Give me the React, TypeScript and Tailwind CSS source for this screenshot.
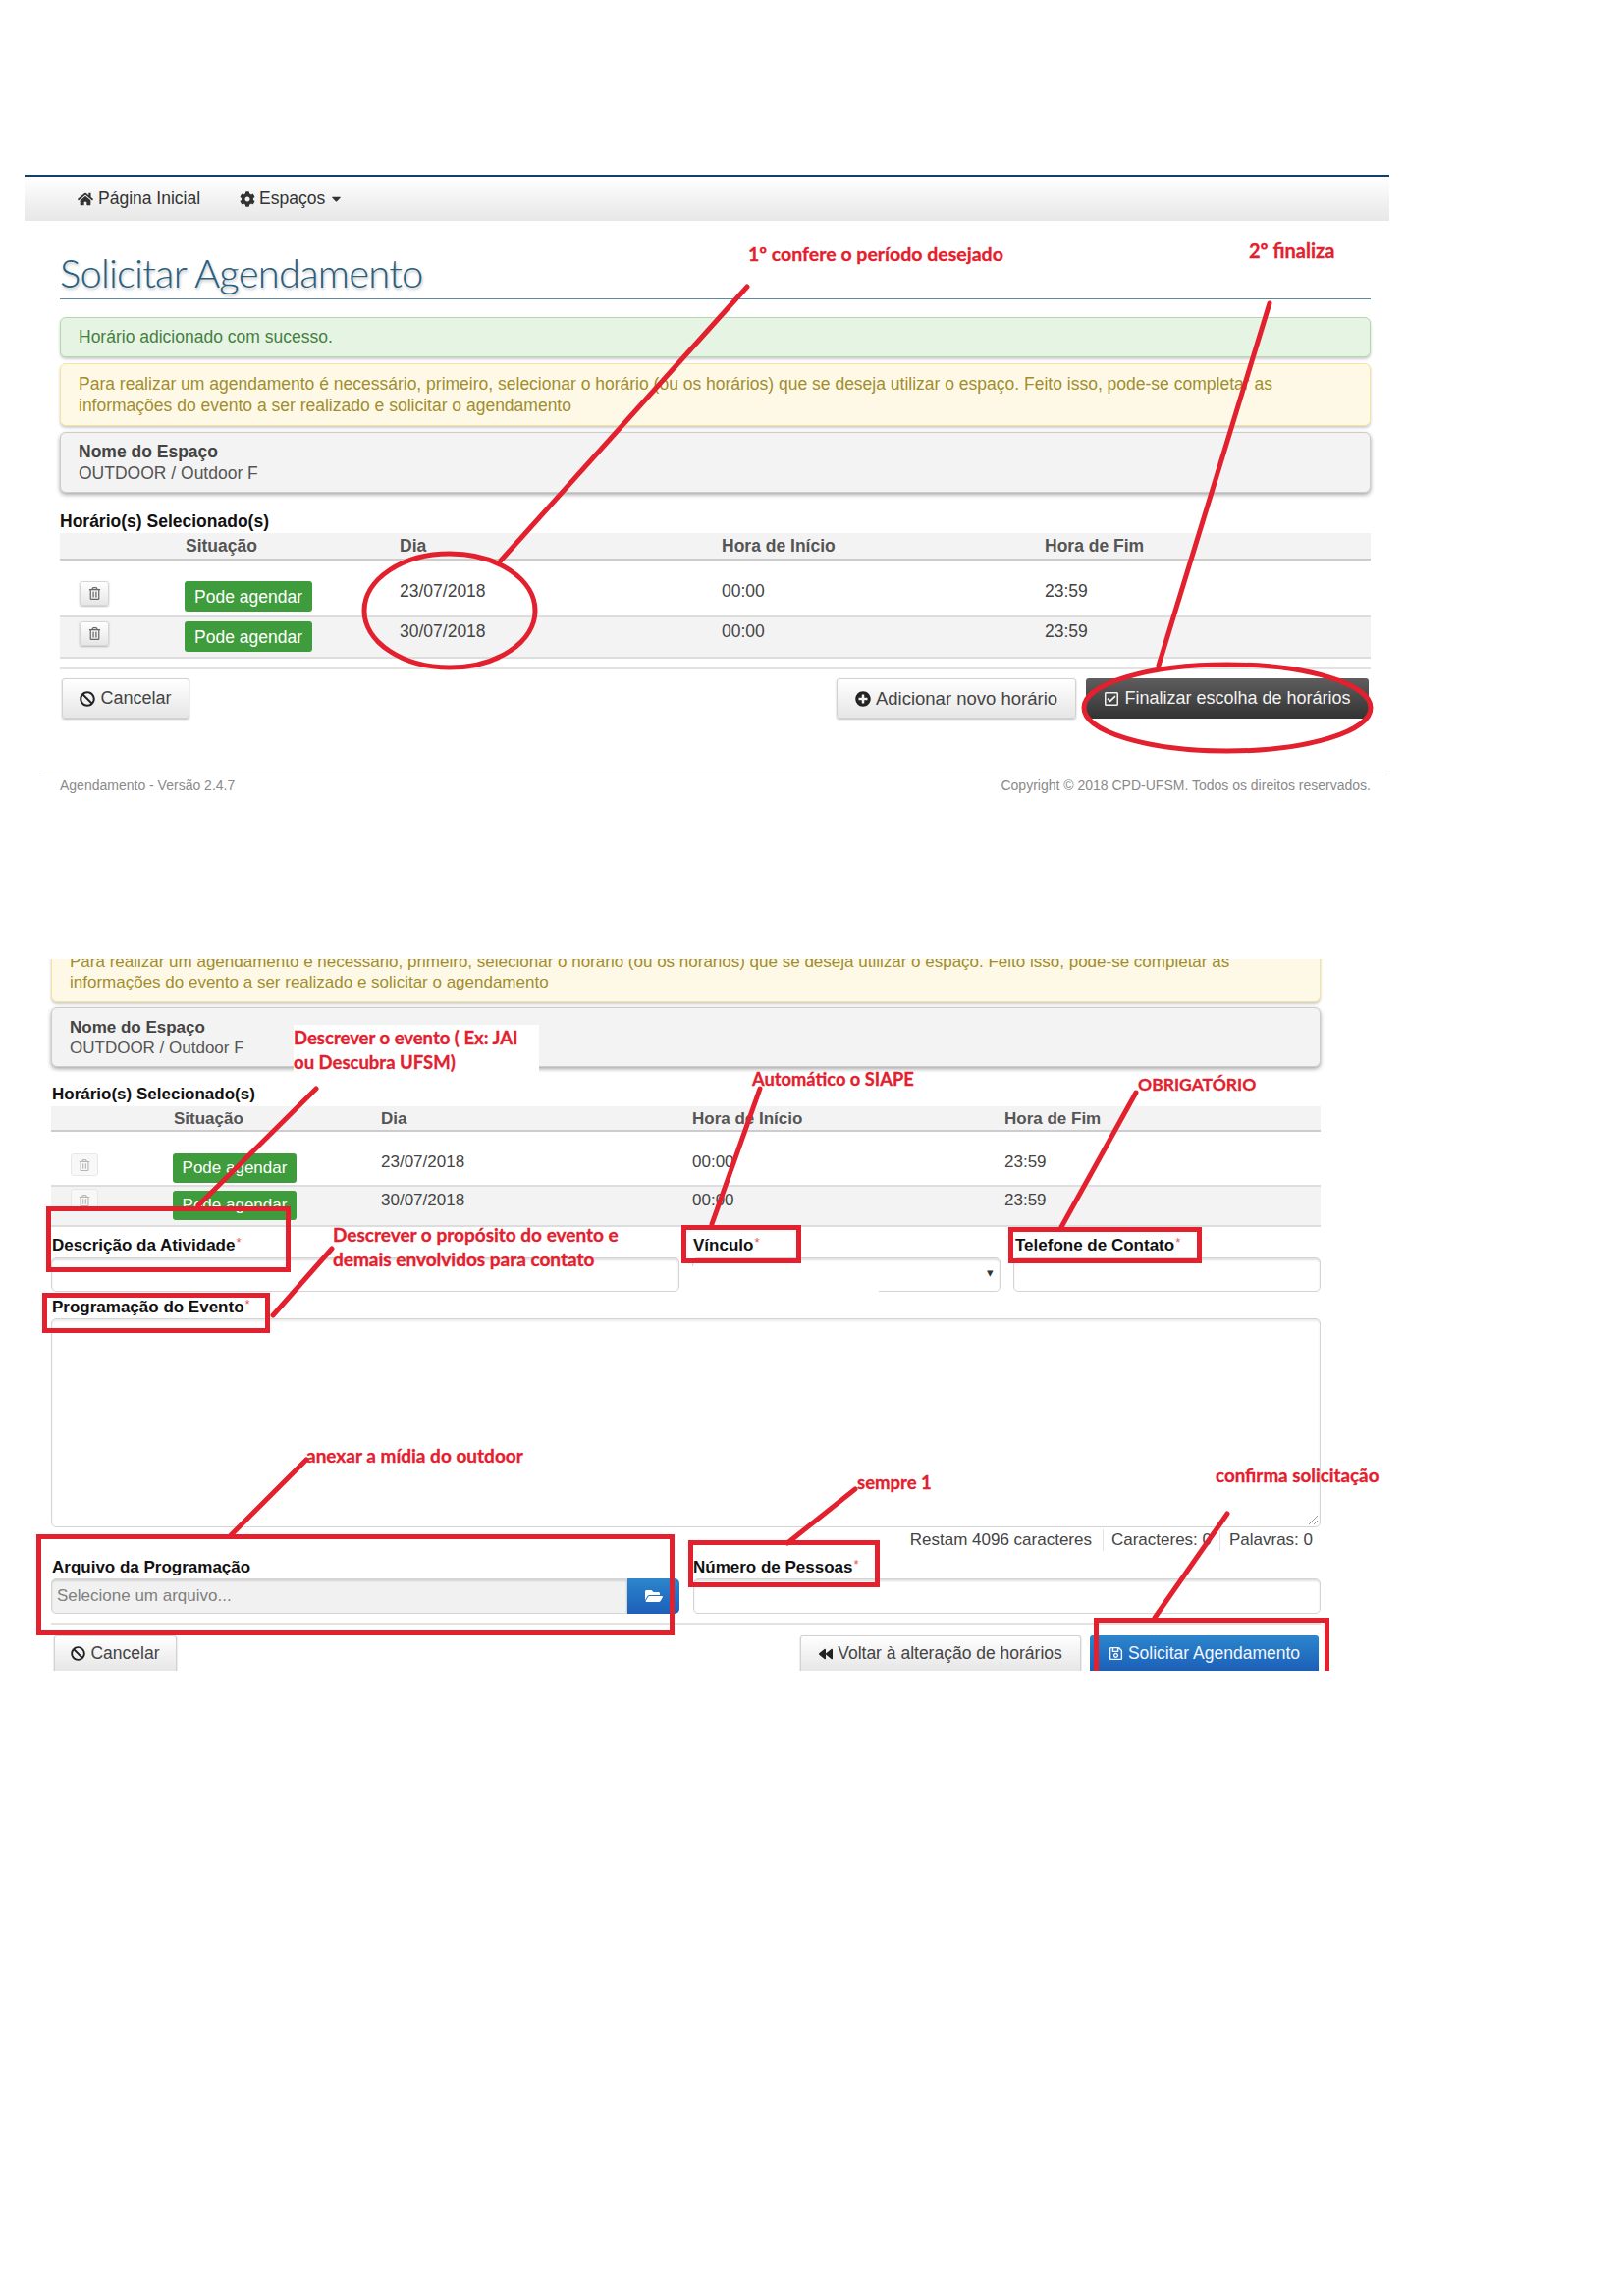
import React from 'react';
import { FaHome, FaCog, FaCaretDown, FaRegTrashAlt, FaBan, FaPlusCircle, FaRegCheckSquare, FaFolderOpen, FaBackward, FaRegSave } from 'react-icons/fa';

const RED = '#e3202e';

const rows = [
  { dia: '23/07/2018', inicio: '00:00', fim: '23:59' },
  { dia: '30/07/2018', inicio: '00:00', fim: '23:59' },
];

const Req = () => <span className="relative -top-[4px] ml-px text-[13px] font-normal leading-none text-[#e8505a]">*</span>;

const Note = ({ className, children }: { className: string; children: React.ReactNode }) => (
  <span className={`absolute whitespace-nowrap font-['Lato',sans-serif] font-bold text-[#e3202e] leading-[24px] [-webkit-text-stroke:0.3px_#e3202e] ${className}`}>
    {children}
  </span>
);

const Field = ({ className }: { className: string }) => (
  <div className={`rounded-[5px] border border-[#d4d4d4] bg-white shadow-[inset_0_2px_2px_rgba(0,0,0,0.12)] ${className}`} />
);

const GreyButton = ({ className, children }: { className: string; children: React.ReactNode }) => (
  <div className={`flex items-center justify-center gap-[5px] border border-[#d2d2d2] bg-gradient-to-b from-white to-[#e6e6e6] text-[#444] shadow-[0_1px_2px_rgba(0,0,0,0.25)] ${className}`}>
    {children}
  </div>
);

export default function App() {
  return (
    <div className="relative w-[1653px] h-[2339px] overflow-hidden bg-white font-['Liberation_Sans',Arial,sans-serif]">
      {/* first screenshot */}
      <div className="pt-[178px] pl-[25px]">
        <div className="w-[1390px]">
          <nav className="flex h-[47px] items-center border-t-2 border-[#123f66] bg-gradient-to-b from-white to-[#e7e7e7] pl-[54px] text-[17.5px] text-[#333]">
            <span className="flex items-center gap-[5px]"><FaHome className="text-[16px]" />Página Inicial</span>
            <span className="ml-[40px] flex items-center gap-[4px]"><FaCog className="text-[16px]" />Espaços<FaCaretDown className="text-[15px]" /></span>
          </nav>

          <div className="ml-[36px] w-[1335px]">
            <div className="flex h-[80px] items-end border-b border-[#5d8aa3] pb-[3px]">
              <h1 className="font-['Lato',sans-serif] text-[40px] font-light leading-[46px] tracking-[-0.8px] text-[#2a5f80] [text-shadow:1px_2px_3px_rgba(0,0,0,0.25)]">
                Solicitar Agendamento
              </h1>
            </div>

            <div className="mt-[18px] flex h-[41px] items-center rounded-[6px] border border-[#b4d8ae] bg-[#e6f4e3] pl-[18px] text-[17.5px] text-[#44803f] shadow-[0_2px_3px_rgba(0,0,0,0.2)]">
              Horário adicionado com sucesso.
            </div>
            <div className="mt-[6px] flex h-[64px] items-center rounded-[6px] border border-[#f5e4a0] bg-[#fef9e6] pl-[18px] text-[17.5px] leading-[22px] text-[#a18d2e] shadow-[0_2px_3px_rgba(0,0,0,0.2)]">
              <p>
                Para realizar um agendamento é necessário, primeiro, selecionar o horário (ou os horários) que se deseja utilizar o espaço. Feito isso, pode-se completar as<br />
                informações do evento a ser realizado e solicitar o agendamento
              </p>
            </div>
            <div className="mt-[6px] flex h-[62px] flex-col justify-center rounded-[6px] border border-[#cccccc] bg-[#f3f3f3] pl-[18px] text-[17.5px] leading-[22px] text-[#555] shadow-[0_2px_4px_rgba(0,0,0,0.35)]">
              <b className="text-[#444]">Nome do Espaço</b>
              <span>OUTDOOR / Outdoor F</span>
            </div>

            <div className="flex h-[41px] items-end pb-[2px] text-[17.5px] font-bold leading-[20px] text-[#111]">Horário(s) Selecionado(s)</div>

            <div className="grid h-[28px] grid-cols-[128px_218px_328px_329px_1fr] items-center border-b-2 border-[#cccccc] bg-[#f3f3f3] text-[17.5px] font-bold text-[#555]">
              <span /><span>Situação</span><span>Dia</span><span>Hora de Início</span><span>Hora de Fim</span>
            </div>
            {rows.map((r, i) => (
              <div
                key={r.dia}
                className={`grid grid-cols-[128px_218px_328px_329px_1fr] border-b-2 border-[#dddddd] text-[17.5px] leading-[18px] text-[#444] ${i === 0 ? 'h-[58px] pt-[22px]' : 'h-[42px] bg-[#f3f3f3] pt-[5px]'}`}
              >
                <div className="pl-[20px]">
                  <div className="-mt-px flex h-[25px] w-[30px] items-center justify-center rounded-[3px] border border-[#d6d6d6] bg-gradient-to-b from-white to-[#e6e6e6] text-[13px] text-[#666] shadow-[0_1px_2px_rgba(0,0,0,0.25)]"><FaRegTrashAlt /></div>
                </div>
                <div>
                  <div className="-ml-px -mt-px flex h-[31px] w-[130px] items-center justify-center rounded-[3px] bg-[#3f9c3c] text-[17.5px] text-white">Pode agendar</div>
                </div>
                <span>{r.dia}</span>
                <span>{r.inicio}</span>
                <span>{r.fim}</span>
              </div>
            ))}

            <div className="mt-[9px] border-t-2 border-[#e2e2e2]" />
            <div className="mt-[9px] flex h-[41px] items-stretch text-[18px]">
              <GreyButton className="ml-[2px] w-[130px] rounded-[3px]"><FaBan className="text-[16px] text-[#222]" />Cancelar</GreyButton>
              <GreyButton className="ml-auto w-[244px] rounded-[3px] text-[18.5px]"><FaPlusCircle className="text-[16px] text-[#222]" />Adicionar novo horário</GreyButton>
              <div className="ml-[10px] mr-[2px] flex w-[288px] items-center justify-center gap-[5px] rounded-[3px] bg-gradient-to-b from-[#5e5e5e] to-[#333333] text-[#f2f2f2]">
                <FaRegCheckSquare className="text-[16px]" />Finalizar escolha de horários
              </div>
            </div>
          </div>

          <footer className="ml-[19px] mt-[56px] flex w-[1369px] justify-between border-t border-[#d9d9d9] px-[17px] pt-[2px] text-[14px] leading-[18px] text-[#8a8a8a]">
            <span>Agendamento - Versão 2.4.7</span>
            <span>Copyright © 2018 CPD-UFSM. Todos os direitos reservados.</span>
          </footer>
        </div>
      </div>

      {/* second screenshot, cut off at top and bottom */}
      <div className="absolute left-[44px] top-[977px] h-[725px] w-[1316px] overflow-hidden pl-[8px]">
        <div className="w-[1293px] text-[17px] text-[#444]">
          <div className="-mt-[18px] flex h-[62px] items-center rounded-[6px] border border-[#f5e4a0] bg-[#fef9e6] pl-[18px] leading-[21px] text-[#a18d2e] shadow-[0_2px_3px_rgba(0,0,0,0.2)]">
            <p>
              Para realizar um agendamento é necessário, primeiro, selecionar o horário (ou os horários) que se deseja utilizar o espaço. Feito isso, pode-se completar as<br />
              informações do evento a ser realizado e solicitar o agendamento
            </p>
          </div>
          <div className="mt-[5px] flex h-[61px] flex-col justify-center rounded-[6px] border border-[#cccccc] bg-[#f3f3f3] pl-[18px] leading-[21px] text-[#555] shadow-[0_2px_4px_rgba(0,0,0,0.35)]">
            <b className="text-[#444]">Nome do Espaço</b>
            <span>OUTDOOR / Outdoor F</span>
          </div>

          <div className="flex h-[40px] items-end pl-px pb-[2px] font-bold leading-[20px] text-[#111]">Horário(s) Selecionado(s)</div>

          <div className="grid h-[26px] grid-cols-[125px_211px_317px_318px_1fr] items-center border-b-2 border-[#cccccc] bg-[#f3f3f3] font-bold text-[#555]">
            <span /><span>Situação</span><span>Dia</span><span>Hora de Início</span><span>Hora de Fim</span>
          </div>
          {rows.map((r, i) => (
            <div
              key={r.dia}
              className={`grid grid-cols-[125px_211px_317px_318px_1fr] border-b-2 border-[#dddddd] leading-[18px] ${i === 0 ? 'h-[56px] pt-[22px]' : 'h-[41px] bg-[#f3f3f3] pt-[5px]'}`}
            >
              <div className="pl-[20px]">
                <div className={`flex h-[23px] w-[28px] items-center justify-center rounded-[3px] border border-[#e8e8e8] bg-[#f8f8f8] text-[12px] text-[#b5b5b5] ${i === 0 ? '' : '-mt-[3px]'}`}><FaRegTrashAlt /></div>
              </div>
              <div>
                <div className={`-ml-px flex h-[30px] w-[126px] items-center justify-center rounded-[3px] bg-[#3f9c3c] text-[17px] text-white ${i === 0 ? '' : '-mt-px'}`}>Pode agendar</div>
              </div>
              <span>{r.dia}</span>
              <span>{r.inicio}</span>
              <span>{r.fim}</span>
            </div>
          ))}

          <div className="flex gap-[13px]">
            <div className="w-[640px]">
              <div className="flex h-[31px] items-center pl-px pt-[6px] font-bold text-[#111]"><span>Descrição da Atividade<Req /></span></div>
              <Field className="h-[35px]" />
            </div>
            <div className="w-[314px]">
              <div className="flex h-[31px] items-center pl-px pt-[6px] font-bold text-[#111]"><span>Vínculo<Req /></span></div>
              <Field className="h-[35px]" />
            </div>
            <div className="w-[313px]">
              <div className="flex h-[31px] items-center pl-[2px] pt-[6px] font-bold text-[#111]"><span>Telefone de Contato<Req /></span></div>
              <Field className="h-[35px]" />
            </div>
          </div>

          <div className="flex h-[27px] items-center pl-px pt-[5px] font-bold text-[#111]"><span>Programação do Evento<Req /></span></div>
          <div className="relative h-[213px] rounded-[5px] border border-[#d4d4d4] bg-white shadow-[inset_0_2px_2px_rgba(0,0,0,0.08)]">
            <svg viewBox="0 0 12 12" className="absolute bottom-[1px] right-[1px] h-[12px] w-[12px]" stroke="#999" strokeWidth="1">
              <line x1="2" y1="11" x2="11" y2="2" />
              <line x1="7" y1="11" x2="11" y2="7" />
            </svg>
          </div>

          <div className="flex h-[24px] items-center justify-end pr-[8px] pt-[2px] leading-[22px]">
            <span className="pr-[11px]">Restam 4096 caracteres</span>
            <span className="w-[119px] border-l border-[#e2e2e2] pl-[8px]">Caracteres: 0</span>
            <span className="border-l border-[#e2e2e2] pl-[9px]">Palavras: 0</span>
          </div>

          <div className="flex gap-[14px]">
            <div className="w-[640px]">
              <div className="flex h-[28px] items-center pl-px pt-[5px] font-bold text-[#111]">Arquivo da Programação</div>
              <div className="flex h-[36px]">
                <div className="flex flex-1 items-center rounded-l-[5px] border border-[#d4d4d4] bg-[#f1f1f1] pl-[5px] text-[#808080] shadow-[inset_0_2px_2px_rgba(0,0,0,0.12)]">Selecione um arquivo...</div>
                <div className="flex w-[53px] items-center justify-center rounded-r-[5px] bg-gradient-to-b from-[#2d86cc] to-[#1d5fb9] text-[18px] text-white"><FaFolderOpen /></div>
              </div>
            </div>
            <div className="flex-1">
              <div className="flex h-[28px] items-center pt-[5px] font-bold text-[#111]"><span>Número de Pessoas<Req /></span></div>
              <Field className="h-[36px]" />
            </div>
          </div>

          <div className="mt-[9px] border-t-2 border-[#e2e2e2]" />
          <div className="mt-[11px] flex h-[36px] items-stretch text-[17.5px]">
            <GreyButton className="ml-[3px] w-[125px] rounded-t-[3px] border-b-0"><FaBan className="text-[15px] text-[#222]" />Cancelar</GreyButton>
            <GreyButton className="ml-auto w-[286px] rounded-t-[3px] border-b-0"><FaBackward className="text-[14px] text-[#222]" />Voltar à alteração de horários</GreyButton>
            <div className="ml-[9px] mr-[2px] flex w-[233px] items-center justify-center gap-[5px] rounded-t-[3px] bg-gradient-to-b from-[#2d86cc] to-[#1d5fb9] text-[#f2f6fb]">
              <FaRegSave className="text-[15px]" />Solicitar Agendamento
            </div>
          </div>
        </div>
      </div>

      {/* select arrow and the white patch pasted over the Vínculo select */}
      <div className="absolute left-[696px] top-[1290px] h-[30px] w-[199px] bg-white" />
      <span className="absolute left-[1005px] top-[1289px] text-[13px] leading-[16px] text-[#333]">▾</span>

      {/* red drawing on top of the screenshots */}
      <svg className="pointer-events-none absolute left-0 top-0" width="1653" height="2339" fill="none" stroke={RED} strokeLinecap="round">
        <g strokeWidth="5">
          <line x1="761" y1="292" x2="510" y2="571" />
          <line x1="1293" y1="309" x2="1180" y2="678" />
          <line x1="322" y1="1109" x2="202" y2="1228" />
          <line x1="338" y1="1272" x2="278" y2="1340" />
          <line x1="774" y1="1109" x2="725" y2="1247" />
          <line x1="1157" y1="1113" x2="1081" y2="1250" />
          <line x1="312" y1="1487" x2="235" y2="1564" />
          <line x1="871" y1="1517" x2="802" y2="1572" />
          <line x1="1250" y1="1542" x2="1176" y2="1648" />
          <ellipse cx="458" cy="622" rx="87" ry="58" />
          <ellipse cx="1250" cy="721" rx="146" ry="44" />
        </g>
        <g strokeWidth="5" strokeLinecap="butt">
          <rect x="49.5" y="1231.5" width="244" height="62" />
          <rect x="45.5" y="1319.5" width="227" height="36" />
          <rect x="696.5" y="1250.5" width="117" height="34" />
          <rect x="1029.5" y="1252.5" width="192" height="32" />
          <rect x="39.5" y="1565.5" width="645" height="98" />
          <rect x="703.5" y="1571.5" width="190" height="43" />
          <path d="M1116.5 1702 V1650.5 H1351.5 V1702" />
        </g>
      </svg>

      <Note className="left-[762px] top-[247px] text-[19.5px]">1º confere o período desejado</Note>
      <Note className="left-[1272px] top-[243px] text-[20px]">2º finaliza</Note>

      <div className="absolute left-[299px] top-[1044px] h-[49px] w-[250px] bg-white" />
      <Note className="left-[299px] top-[1045px] text-[18.5px]">Descrever o evento ( Ex: JAI</Note>
      <Note className="left-[299px] top-[1070px] text-[18.5px]">ou Descubra UFSM)</Note>
      <Note className="left-[766px] top-[1087px] text-[18.3px]">Automático o SIAPE</Note>
      <Note className="left-[1159px] top-[1093px] text-[17.5px]">OBRIGATÓRIO</Note>
      <Note className="left-[339px] top-[1246px] text-[19px]">Descrever o propósito do evento e</Note>
      <Note className="left-[339px] top-[1271px] text-[19px]">demais envolvidos para contato</Note>
      <Note className="left-[312px] top-[1471px] text-[19px]">anexar a mídia do outdoor</Note>
      <Note className="left-[873px] top-[1498px] text-[18.5px]">sempre 1</Note>
      <Note className="left-[1238px] top-[1491px] text-[18.8px]">confirma solicitação</Note>
    </div>
  );
}
